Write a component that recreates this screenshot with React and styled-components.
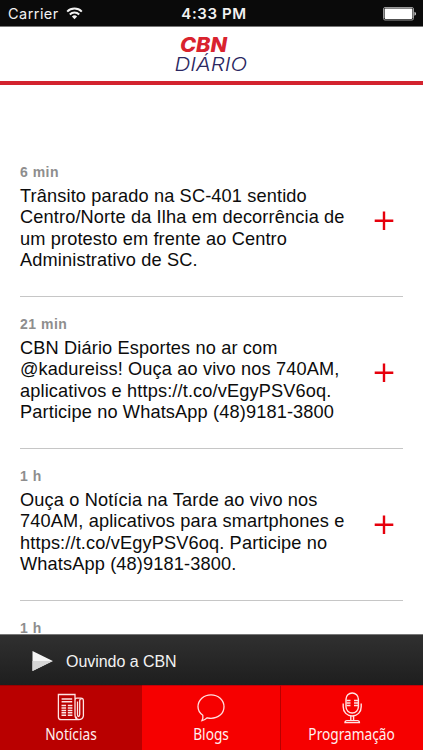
import React from 'react';
import styled, { createGlobalStyle } from 'styled-components';

const GlobalStyle = createGlobalStyle`
  *,
  *::before,
  *::after {
    box-sizing: border-box;
  }

  body {
    margin: 0;
    background-color: #fff;
    font-family: 'Liberation Sans', Arial, sans-serif;
  }
`;

const Screen = styled.div`
  display: flex;
  flex-flow: column;
  width: 100%;
  height: 750px;
  overflow: hidden;
  background-color: #fff;
`;

const StatusBar = styled.div`
  display: grid;
  grid-template-columns: 1fr auto 1fr;
  align-items: center;
  flex: none;
  height: 27px;
  padding: 1px 6px 0 8px;
  border-bottom: 1px solid #777;
  background-color: #0a0a0a;
  color: #f2f2f2;
  font-family: Inter, sans-serif;
`;

const Carrier = styled.div`
  display: flex;
  align-items: center;
  gap: 7px;
  font-size: 14.5px;
  letter-spacing: 0.45px;
`;

const Clock = styled.div`
  padding-left: 3px;
  font-size: 15px;
  font-weight: 600;
  letter-spacing: 0.6px;
`;

const Battery = styled.svg`
  justify-self: end;
`;

const Header = styled.header`
  display: flex;
  justify-content: center;
  flex: none;
  height: 58px;
  border-bottom: 4px solid #d3232e;
`;

const NewsList = styled.main`
  flex: 1;
  min-height: 0;
  padding: 60px 20px 0;
  overflow: hidden;
`;

const NewsItem = styled.article`
  display: flex;
  justify-content: space-between;
  align-items: center;
  height: 152px;
  border-bottom: 1px solid #c6c6c6;
`;

const NewsBody = styled.div`
  align-self: flex-start;
  padding-top: 18px;
`;

const Time = styled.div`
  color: #8e8e8e;
  font-size: 14px;
  font-weight: bold;
  line-height: 18px;
  letter-spacing: 0.5px;
`;

const Paragraph = styled.p`
  margin: 5px 0 0;
  color: #0c0c0c;
  font-size: 18.2px;
  line-height: 21.3px;
  letter-spacing: 0.135px;
  white-space: nowrap;
`;

const MoreBtn = styled.button`
  display: flex;
  margin: 0 9px 0 0;
  padding: 0;
  border: none;
  background: none;
  cursor: pointer;
`;

const Player = styled.div`
  display: flex;
  align-items: center;
  gap: 12px;
  flex: none;
  height: 51px;
  padding: 3px 0 0 31px;
  border-top: 1px solid #777;
  background-image: linear-gradient(#303030, #1e1e1e);
  color: #f2f2f2;
  font-size: 16px;
  letter-spacing: -0.05px;
`;

const TabBar = styled.nav`
  display: grid;
  grid-template-columns: 142px 139px 1fr;
  flex: none;
  height: 65px;
`;

const Tab = styled.button`
  display: flex;
  flex-flow: column;
  justify-content: space-between;
  align-items: center;
  padding: 6px 0 5px;
  border: none;
  border-top: 1px solid ${({ $active }) => ($active ? '#980000' : '#c40008')};
  border-right: ${({ $divided }) => ($divided ? '1px solid #b80000' : 'none')};
  background-color: ${({ $active }) => ($active ? '#b90000' : '#f60000')};
  color: #fff0f0;
  font-family: 'Noto Sans', 'Open Sans', sans-serif;
  font-size: 15.4px;
  line-height: 20px;
  cursor: pointer;
`;

// squeezed to get a condensed humanist look
const TabLabel = styled.span`
  transform: scaleX(0.89);
`;

const WifiIcon = () => (
  <svg width='17' height='13' viewBox='0 0 17 13' fill='none' stroke='#f2f2f2' strokeWidth='2'>
    <path d='M1.2 4.6a10.4 10.4 0 0 1 14.6 0' />
    <path d='M3.8 7.5a6.7 6.7 0 0 1 9.4 0' />
    <path d='M8.5 12.2 5.9 9.6a3.7 3.7 0 0 1 5.2 0Z' fill='#f2f2f2' stroke='none' />
  </svg>
);

const BatteryIcon = () => (
  <Battery width='34' height='14' viewBox='0 0 34 14'>
    <rect x='0.5' y='0.5' width='30' height='12.5' rx='1.5' fill='none' stroke='#999' />
    <rect x='1.6' y='1.6' width='27.8' height='10.3' rx='0.8' fill='#fff' />
    <path d='M31.5 4.7q1.5 0.5 1.5 2t-1.5 2Z' fill='#ddd' />
  </Battery>
);

const Logo = () => (
  <svg width='90' height='54' viewBox='0 0 90 54' fontFamily='Inter, sans-serif' fontStyle='italic'>
    <text
      x='13'
      y='24.6'
      fontSize='20.5'
      fontWeight='800'
      fill='#d9232e'
      textLength='47'
      lengthAdjust='spacingAndGlyphs'
    >
      CBN
    </text>
    <text
      x='7.6'
      y='43.8'
      fontSize='19'
      fontWeight='300'
      fill='#2b2862'
      textLength='72.5'
      lengthAdjust='spacingAndGlyphs'
    >
      DIÁRIO
    </text>
  </svg>
);

const PlusIcon = () => (
  <svg width='20' height='20' viewBox='0 0 20 20' stroke='#e6000c' strokeWidth='2.4'>
    <path d='M0.7 9.7h18.6M10 0.4v18.6' />
  </svg>
);

const PlayIcon = () => (
  <svg width='23' height='22' viewBox='0 0 23 22'>
    <path d='M1.5 0 21.8 10 1.5 20Z' fill='#f4f4f4' />
    <path d='M1.5 10h20.3L1.5 20Z' fill='#d6d6d6' />
  </svg>
);

const NewspaperIcon = () => (
  <svg width='28' height='32' viewBox='0 0 28 32' fill='none' stroke='#ffe4e4' strokeWidth='1.3'>
    <path d='M19 24.5q0.5 3.2 3.2 3.2H4q-2.6 0-2.6-2.8V2.5H18v20q0 5.2 3.8 5.2t4.6-3.8V9q0-2.8-2.6-2.8H20q-2 0-2 2' />
    <path d='M20.5 9.5v13q0 2 1 2t1.2-2V9q0-2.5 2-2' />
    <path d='M4.6 7.1h10.6M4.6 9.7h10.6' strokeWidth='1.5' />
    <path
      d='M4.5 13.6h4.6M4.5 16h4.6M4.5 18.4h4.6M4.5 20.8h4.6M4.5 23.2h4.6M10.8 13.6h4.6M10.8 16h4.6M10.8 18.4h4.6M10.8 20.8h4.6M10.8 23.2h4.6'
      strokeWidth='1.5'
    />
  </svg>
);

const BubbleIcon = () => (
  <svg width='28' height='32' viewBox='0 0 28 32' fill='none' stroke='#ffe0e0' strokeWidth='1.3'>
    <path d='M5.8 23.3C2.8 21.2 1 18.2 1 14.8 1 8 6.8 2.8 14 2.8s13 5.2 13 12-5.8 11.5-13 11.5c-1.4 0-2.6-.2-3.8-.5-1.6 1.6-3 2.3-5.2 2.8.8-1.6 1.2-3.4.8-5.3Z' />
  </svg>
);

const MicIcon = () => (
  <svg width='28' height='32' viewBox='0 0 28 32' fill='none' stroke='#ffe4e4' strokeWidth='1.4'>
    <rect x='8' y='1' width='12.4' height='20' rx='6.2' />
    <path d='M8.5 8.5h4M8.5 11h4M8.5 13.5h4M16 8.5h4M16 11h4M16 13.5h4' />
    <path d='M5.2 11.5v3.2c0 5.4 3.8 9.3 9 9.3s9-3.9 9-9.3v-3.2' />
    <path d='M12.8 24v4M15.6 24v4' />
    <path d='M7 30.6q0-2 2-2h10.4q2 0 2 2Z' />
  </svg>
);

const news = [
  {
    id: 1,
    time: '6 min',
    lines: [
      'Trânsito parado na SC-401 sentido',
      'Centro/Norte da Ilha em decorrência de',
      'um protesto em frente ao Centro',
      'Administrativo de SC.',
    ],
  },
  {
    id: 2,
    time: '21 min',
    lines: [
      'CBN Diário Esportes no ar com',
      '@kadureiss! Ouça ao vivo nos 740AM,',
      'aplicativos e https://t.co/vEgyPSV6oq.',
      'Participe no WhatsApp (48)9181-3800',
    ],
  },
  {
    id: 3,
    time: '1 h',
    lines: [
      'Ouça o Notícia na Tarde ao vivo nos',
      '740AM, aplicativos para smartphones e',
      'https://t.co/vEgyPSV6oq. Participe no',
      'WhatsApp (48)9181-3800.',
    ],
  },
  { id: 4, time: '1 h', lines: [] },
];

const App = () => (
  <>
    <GlobalStyle />
    <Screen>
      <StatusBar>
        <Carrier>
          Carrier
          <WifiIcon />
        </Carrier>
        <Clock>4:33 PM</Clock>
        <BatteryIcon />
      </StatusBar>
      <Header>
        <Logo />
      </Header>
      <NewsList>
        {news.map((item) => (
          <NewsItem key={item.id}>
            <NewsBody>
              <Time>{item.time}</Time>
              <Paragraph>
                {item.lines.map((line) => (
                  <React.Fragment key={line}>
                    {line}
                    <br />
                  </React.Fragment>
                ))}
              </Paragraph>
            </NewsBody>
            <MoreBtn>
              <PlusIcon />
            </MoreBtn>
          </NewsItem>
        ))}
      </NewsList>
      <Player>
        <PlayIcon />
        Ouvindo a CBN
      </Player>
      <TabBar>
        <Tab $active>
          <NewspaperIcon />
          <TabLabel>Notícias</TabLabel>
        </Tab>
        <Tab $divided>
          <BubbleIcon />
          <TabLabel>Blogs</TabLabel>
        </Tab>
        <Tab>
          <MicIcon />
          <TabLabel>Programação</TabLabel>
        </Tab>
      </TabBar>
    </Screen>
  </>
);

export default App;
